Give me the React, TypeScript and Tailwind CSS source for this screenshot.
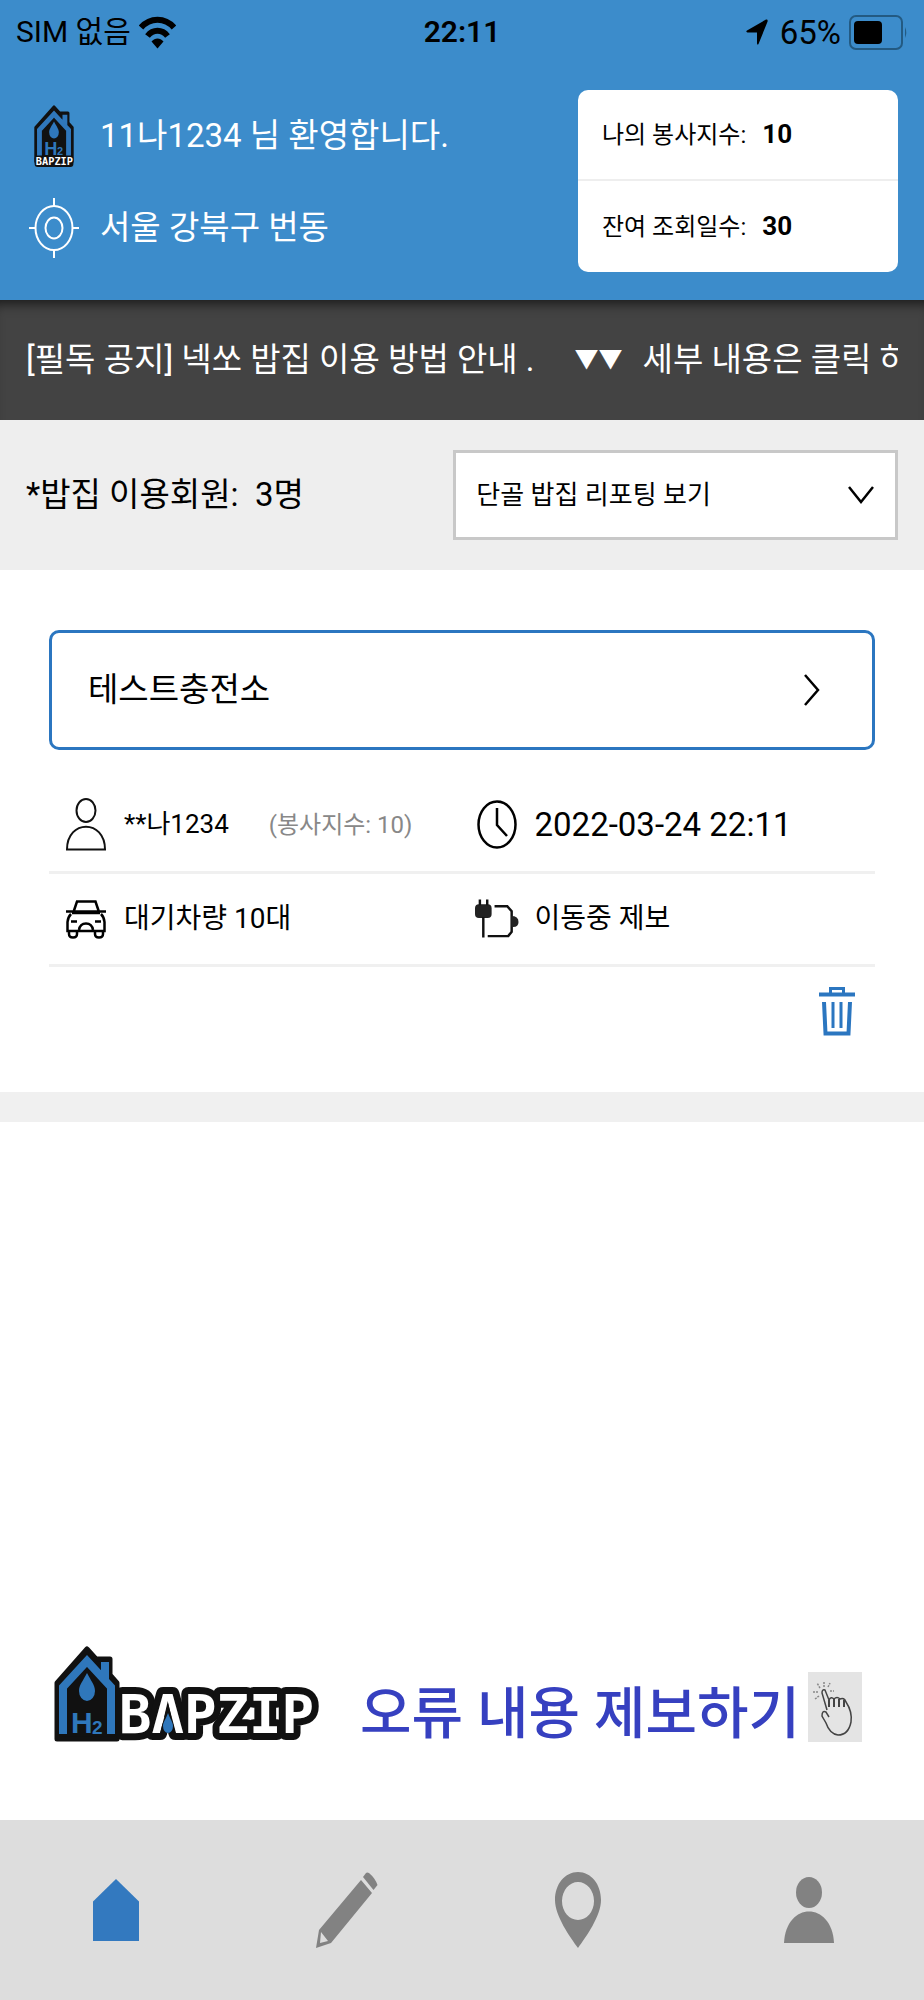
import type { ReactNode } from 'react';

const navItems = [
  { label: '홈', href: '#home', icon: <HomeIcon /> },
  { label: '제보하기', href: '#report', icon: <PencilIcon /> },
  { label: '충전소 지도', href: '#map', icon: <PinIcon /> },
  { label: '내 정보', href: '#me', icon: <ProfileIcon /> },
];

const stats = [
  { label: '나의 봉사지수:', value: 10 },
  { label: '잔여 조회일수:', value: 30 },
];

function WifiIcon() {
  return (
    <svg width="37" height="33" viewBox="0 0 37 33" fill="none" stroke="#000" strokeWidth="6" aria-hidden="true">
      <path d="M2 11.500C11 1 26 1 35 11.500" />
      <path d="M8.500 20C14 13 23 13 28.500 20" />
      <path d="M18.500 32.500L12.500 25.500C16 21.500 21 21.500 24.500 25.500Z" fill="#000" stroke="none" />
    </svg>
  );
}

function LocationArrow() {
  return (
    <svg width="22" height="26" viewBox="0 0 22 26" aria-hidden="true">
      <path d="M20 .5Q22 0 21.600 2.500L12.500 25Q11.500 26.500 11 24.500V13.500H1.500Q-.6 13 1 11.500Z" />
    </svg>
  );
}

function BatteryIcon() {
  return (
    <svg width="59" height="35" viewBox="0 0 59 35" aria-hidden="true">
      <rect x="1" y="1" width="52" height="33" rx="6" fill="none" stroke="#235a82" strokeWidth="2" />
      <rect x="5" y="6" width="28" height="23" rx="4" />
      <path d="M56 12Q58.500 17.500 56 23Z" fill="#235a82" />
    </svg>
  );
}

function House() {
  return (
    <g>
      <path d="M3 37L33 3L42 13H56V29L63 37V93H3Z" fill="#111" stroke="#111" strokeWidth="5" strokeLinejoin="round" />
      <path d="M9 88V41L33 15L57 41V88M51 16V34" fill="none" stroke="#2f77bb" strokeWidth="8" />
      <path d="M33 27C37 35 41 39 41 45A8 10 0 0 1 25 45C25 39 29 35 33 27Z" fill="#2f77bb" />
    </g>
  );
}

function MiniLogo() {
  return (
    <svg width="40" height="64" viewBox="0 0 66 102" aria-label="BAPZIP">
      <House />
      <text x="17" y="82" fontFamily="Liberation Sans" fontWeight="700" fontSize="30" fill="#2f77bb">H</text>
      <text x="38" y="83" fontFamily="Liberation Sans" fontWeight="700" fontSize="18" fill="#2f77bb">2</text>
      <rect x="1" y="83" width="64" height="19" rx="5" fill="#111" />
      <text x="3" y="99" fontFamily="DejaVu Sans Mono" fontWeight="700" fontSize="17" fill="#fff">BAPZIP</text>
    </svg>
  );
}

function BannerLogo() {
  return (
    <svg width="270" height="96" viewBox="0 0 270 96" className="overflow-visible" aria-hidden="true">
      <House />
      <text
        x="65"
        y="87"
        fontFamily="DejaVu Sans Mono"
        fontWeight="700"
        fontSize="54"
        fill="#fff"
        stroke="#111"
        strokeWidth="14"
        strokeLinejoin="round"
        paintOrder="stroke"
      >
        BAPZIP
      </text>
      <path d="M9 88V41M57 88V41" fill="none" stroke="#2f77bb" strokeWidth="8" />
      <text x="17" y="87" fontFamily="Liberation Sans" fontWeight="700" fontSize="30" fill="#2f77bb">H</text>
      <text x="38" y="88" fontFamily="Liberation Sans" fontWeight="700" fontSize="19" fill="#2f77bb">2</text>
      <path d="M114 57L122 87H106Z" fill="#111" />
      <path d="M114 67C116 73 119 76 119 80A5 7 0 0 1 109 80C109 76 112 73 114 67Z" fill="#2f77bb" />
    </svg>
  );
}

function TargetIcon() {
  return (
    <svg width="50" height="60" viewBox="0 0 50 60" fill="none" stroke="#fff" strokeWidth="2" aria-hidden="true">
      <ellipse cx="25" cy="30" rx="18.500" ry="22" />
      <ellipse cx="25" cy="30" rx="8.500" ry="10.500" />
      <path d="M25 0V8M25 52V60M0 30H6.500M43.500 30H50" />
    </svg>
  );
}

function UserIcon() {
  return (
    <svg width="40" height="53" viewBox="0 0 40 53" fill="none" stroke="#111" strokeWidth="2" aria-hidden="true">
      <ellipse cx="20" cy="12.500" rx="9.500" ry="11.500" />
      <path d="M1 51.500C1 21 39 21 39 51.500Z" />
    </svg>
  );
}

function ClockIcon() {
  return (
    <svg width="40" height="49" viewBox="0 0 40 49" fill="none" stroke="#000" strokeWidth="2.500" aria-hidden="true">
      <ellipse cx="20" cy="24.500" rx="18.500" ry="23" />
      <path d="M20 8V25L30 36" />
    </svg>
  );
}

function CarIcon() {
  return (
    <svg width="40" height="39" viewBox="0 0 40 39" fill="none" stroke="#000" strokeWidth="2.500" aria-hidden="true">
      <path d="M7.500 12L11 1.500H29.500L33 12M0 11.500H40M5 14Q2 17 1.500 22V31H38.500V22Q38 17 35 14" />
      <path d="M3 31V34Q3 37.500 7 37.500T11 34V31M29 31V34Q29 37.500 33 37.500T37 34V31M13 30Q14 23.500 20 23.500T27 30M5 21.500H11M29 21.500H35" />
      <path d="M6 13H34" />
    </svg>
  );
}

function PlugIcon() {
  return (
    <svg width="45" height="40" viewBox="0 0 45 40" fill="none" stroke="#111" strokeWidth="2.500" aria-hidden="true">
      <rect x="0" y="5" width="17" height="14" rx="4" fill="#222" stroke="none" />
      <path d="M5 0V6M12.500 0V6M8.500 18V39M20 7H33L37.500 12V33L34 37.500H13" />
      <path d="M37 17Q44.500 17 44.500 23T37 28Z" fill="#222" stroke="none" />
    </svg>
  );
}

function TrashIcon() {
  return (
    <svg width="36" height="49" viewBox="0 0 36 49" fill="none" stroke="#2b76c0" aria-hidden="true">
      <path d="M0 7.500H36" strokeWidth="4" />
      <path d="M11.500 6V1.500H24.500V6" strokeWidth="3" />
      <path d="M5 15L6.500 46.500H29.500L31 15" strokeWidth="4" />
      <path d="M14 15V41M22 15V41" strokeWidth="3" />
    </svg>
  );
}

function TapIcon() {
  return (
    <svg width="54" height="70" viewBox="0 0 54 70" fill="none" stroke="#444" strokeWidth="1.500" className="bg-[#e4e4e4]" aria-hidden="true">
      <path d="M19 38L14 21Q14 17 17 18L21 28Q23 24 26 27Q29 24 32 27Q36 25 38 30C42 36 44 43 43 50C41 60 36 63 30 63C23 62 20 57 18 51L14 44Q14 38 18 40L21 45" />
      <path d="M21 28V35M26 27V35M31 27V35M36 28V35" strokeWidth="2" />
      <path d="M16 15V9M12 16L9 11M10 20H5M20 15L22 11M11 24L7 27M22 19H26" stroke="#888" strokeDasharray="2 1" />
    </svg>
  );
}

function HomeIcon() {
  return (
    <svg width="46" height="62" viewBox="0 0 46 62" fill="#3379bf" aria-hidden="true">
      <path d="M23 0L46 22.500V62H0V22.500Z" />
    </svg>
  );
}

function PencilIcon() {
  return (
    <svg width="62" height="76" viewBox="0 0 62 76" fill="#828282" aria-hidden="true">
      <path d="M45 8L56 21L15 71L0 76L3 58ZM5 60L4 71L12 69Z" fillRule="evenodd" />
      <path d="M47 5L50 1Q51 0 53 1Q59 6 61.500 13L57.500 18Z" />
    </svg>
  );
}

function PinIcon() {
  return (
    <svg width="46" height="76" viewBox="0 0 46 76" fill="#828282" aria-hidden="true">
      <path
        fillRule="evenodd"
        d="M23 0C36 0 46 12 46 28C46 44 31 65 23 76C15 65 0 44 0 28C0 12 10 0 23 0ZM23 10A16 19 0 1 0 23 48A16 19 0 1 0 23 10Z"
      />
    </svg>
  );
}

function ProfileIcon() {
  return (
    <svg width="50" height="66" viewBox="0 0 50 66" fill="#828282" aria-hidden="true">
      <ellipse cx="25" cy="15.500" rx="13" ry="15.500" />
      <path d="M0 66C2 24 48 24 50 66Z" />
    </svg>
  );
}

function InfoCell({ icon, children }: { icon: ReactNode; children: ReactNode }) {
  return (
    <div className="flex items-center gap-4">
      <div className="flex w-11 shrink-0 justify-center">{icon}</div>
      {children}
    </div>
  );
}

export default function App() {
  return (
    <div className="flex min-h-screen flex-col bg-white font-['Roboto','Noto_Sans_CJK_KR',sans-serif] text-black">
      <header className="bg-[#3c8ccb]">
        {/* STATUS BAR */}
        <div className="grid h-16 grid-cols-3 items-center px-4 text-[30px] leading-none">
          <div className="flex items-center gap-2">
            <span>SIM 없음</span>
            <WifiIcon />
          </div>
          <div className="text-center font-semibold">22:11</div>
          <div className="flex items-center justify-end gap-2">
            <LocationArrow />
            <span className="ml-1 text-[33px]">65%</span>
            <BatteryIcon />
          </div>
        </div>

        {/* GREETING */}
        <div className="flex justify-between p-[26px]">
          <div className="flex flex-col text-[33px] leading-[44px] text-white">
            <div className="flex h-[92px] items-center gap-[18px]">
              <div className="flex w-14 justify-center">
                <MiniLogo />
              </div>
              <h1>11나1234 님 환영합니다.</h1>
            </div>
            <div className="flex h-[92px] items-center gap-[18px]">
              <div className="flex w-14 justify-center">
                <TargetIcon />
              </div>
              <p>서울 강북구 번동</p>
            </div>
          </div>
          <dl className="w-80 divide-y-2 divide-[#eeeeee] self-start rounded-[10px] bg-white text-2xl">
            {stats.map((s) => (
              <div key={s.label} className="flex h-[91px] items-center gap-4 pl-6">
                <dt>{s.label}</dt>
                <dd className="text-[26px] font-bold">{s.value}</dd>
              </div>
            ))}
          </dl>
        </div>
      </header>

      {/* NOTICE */}
      <a href="#notice" className="block bg-[#434343] px-[26px] py-9 text-[33px] leading-[48px] text-white shadow-[inset_0_12px_12px_-8px_rgba(0,0,0,0.6)]">
        <span className="flex items-center overflow-hidden whitespace-nowrap">
          <span>[필독 공지] 넥쏘 밥집 이용 방법 안내 .</span>
          <span className="mr-5 ml-10 text-2xl leading-[48px]">▼▼</span>
          <span>세부 내용은 클릭 하</span>
        </span>
      </a>

      <div className="flex items-center justify-between bg-[#eeeeee] px-[26px] py-[30px]">
        <p className="whitespace-pre text-[33px]">*밥집 이용회원:  3명</p>
        <div className="relative w-[51%]">
          <select
            aria-label="리포팅 보기"
            className="h-[90px] w-full appearance-none border-3 border-[#c8c8c8] bg-white px-5 text-[26px]"
          >
            <option>단골 밥집 리포팅 보기</option>
            <option>전체 밥집 리포팅 보기</option>
          </select>
          <svg
            className="pointer-events-none absolute top-9 right-6"
            width="26"
            height="18"
            viewBox="0 0 26 18"
            fill="none"
            stroke="#000"
            strokeWidth="2.500"
            aria-hidden="true"
          >
            <path d="M1 1L13 16L25 1" />
          </svg>
        </div>
      </div>

      {/* REPORT */}
      <main>
        <article className="border-b-[30px] border-[#f0f0f0] px-[49px] pt-[60px] pb-[56px]">
          <button className="flex h-[120px] w-full items-center justify-between rounded-[10px] border-3 border-[#2b76c0] pr-[52px] pl-9 text-left text-[33px]">
            테스트충전소
            <svg width="16" height="32" viewBox="0 0 16 32" fill="none" stroke="#000" strokeWidth="2.500" aria-hidden="true">
              <path d="M1 1L14 16L1 31" />
            </svg>
          </button>
          <div className="mt-7 grid h-[96px] grid-cols-[41fr_40fr] items-center border-b-3 border-[#f0f0f0] pl-[15px]">
            <InfoCell icon={<UserIcon />}>
              <span className="text-[26px]">**나1234</span>
              <span className="ml-6 text-2xl text-[#888888]">(봉사지수: 10)</span>
            </InfoCell>
            <InfoCell icon={<ClockIcon />}>
              <time className="text-[33px]">2022-03-24 22:11</time>
            </InfoCell>
          </div>
          <div className="grid h-[93px] grid-cols-[41fr_40fr] items-center border-b-3 border-[#f0f0f0] pl-[15px] text-[28px]">
            <InfoCell icon={<CarIcon />}>대기차량 10대</InfoCell>
            <InfoCell icon={<PlugIcon />}>이동중 제보</InfoCell>
          </div>
          <div className="flex justify-end pt-5 pr-5">
            <button aria-label="삭제">
              <TrashIcon />
            </button>
          </div>
        </article>
      </main>

      {/* ERROR REPORT BANNER */}
      <a href="#error" className="mt-auto flex items-end pr-[62px] pb-[78px] pl-[54px]">
        <BannerLogo />
        <span className="ml-auto text-[56px] leading-none font-medium whitespace-nowrap text-[#3640c0]">오류 내용 제보하기</span>
        <span className="ml-2">
          <TapIcon />
        </span>
      </a>

      <nav className="grid grid-cols-4 bg-[#dddddd]">
        {navItems.map((item) => (
          <a key={item.label} href={item.href} aria-label={item.label} className="flex h-[180px] items-center justify-center">
            {item.icon}
          </a>
        ))}
      </nav>
    </div>
  );
}
